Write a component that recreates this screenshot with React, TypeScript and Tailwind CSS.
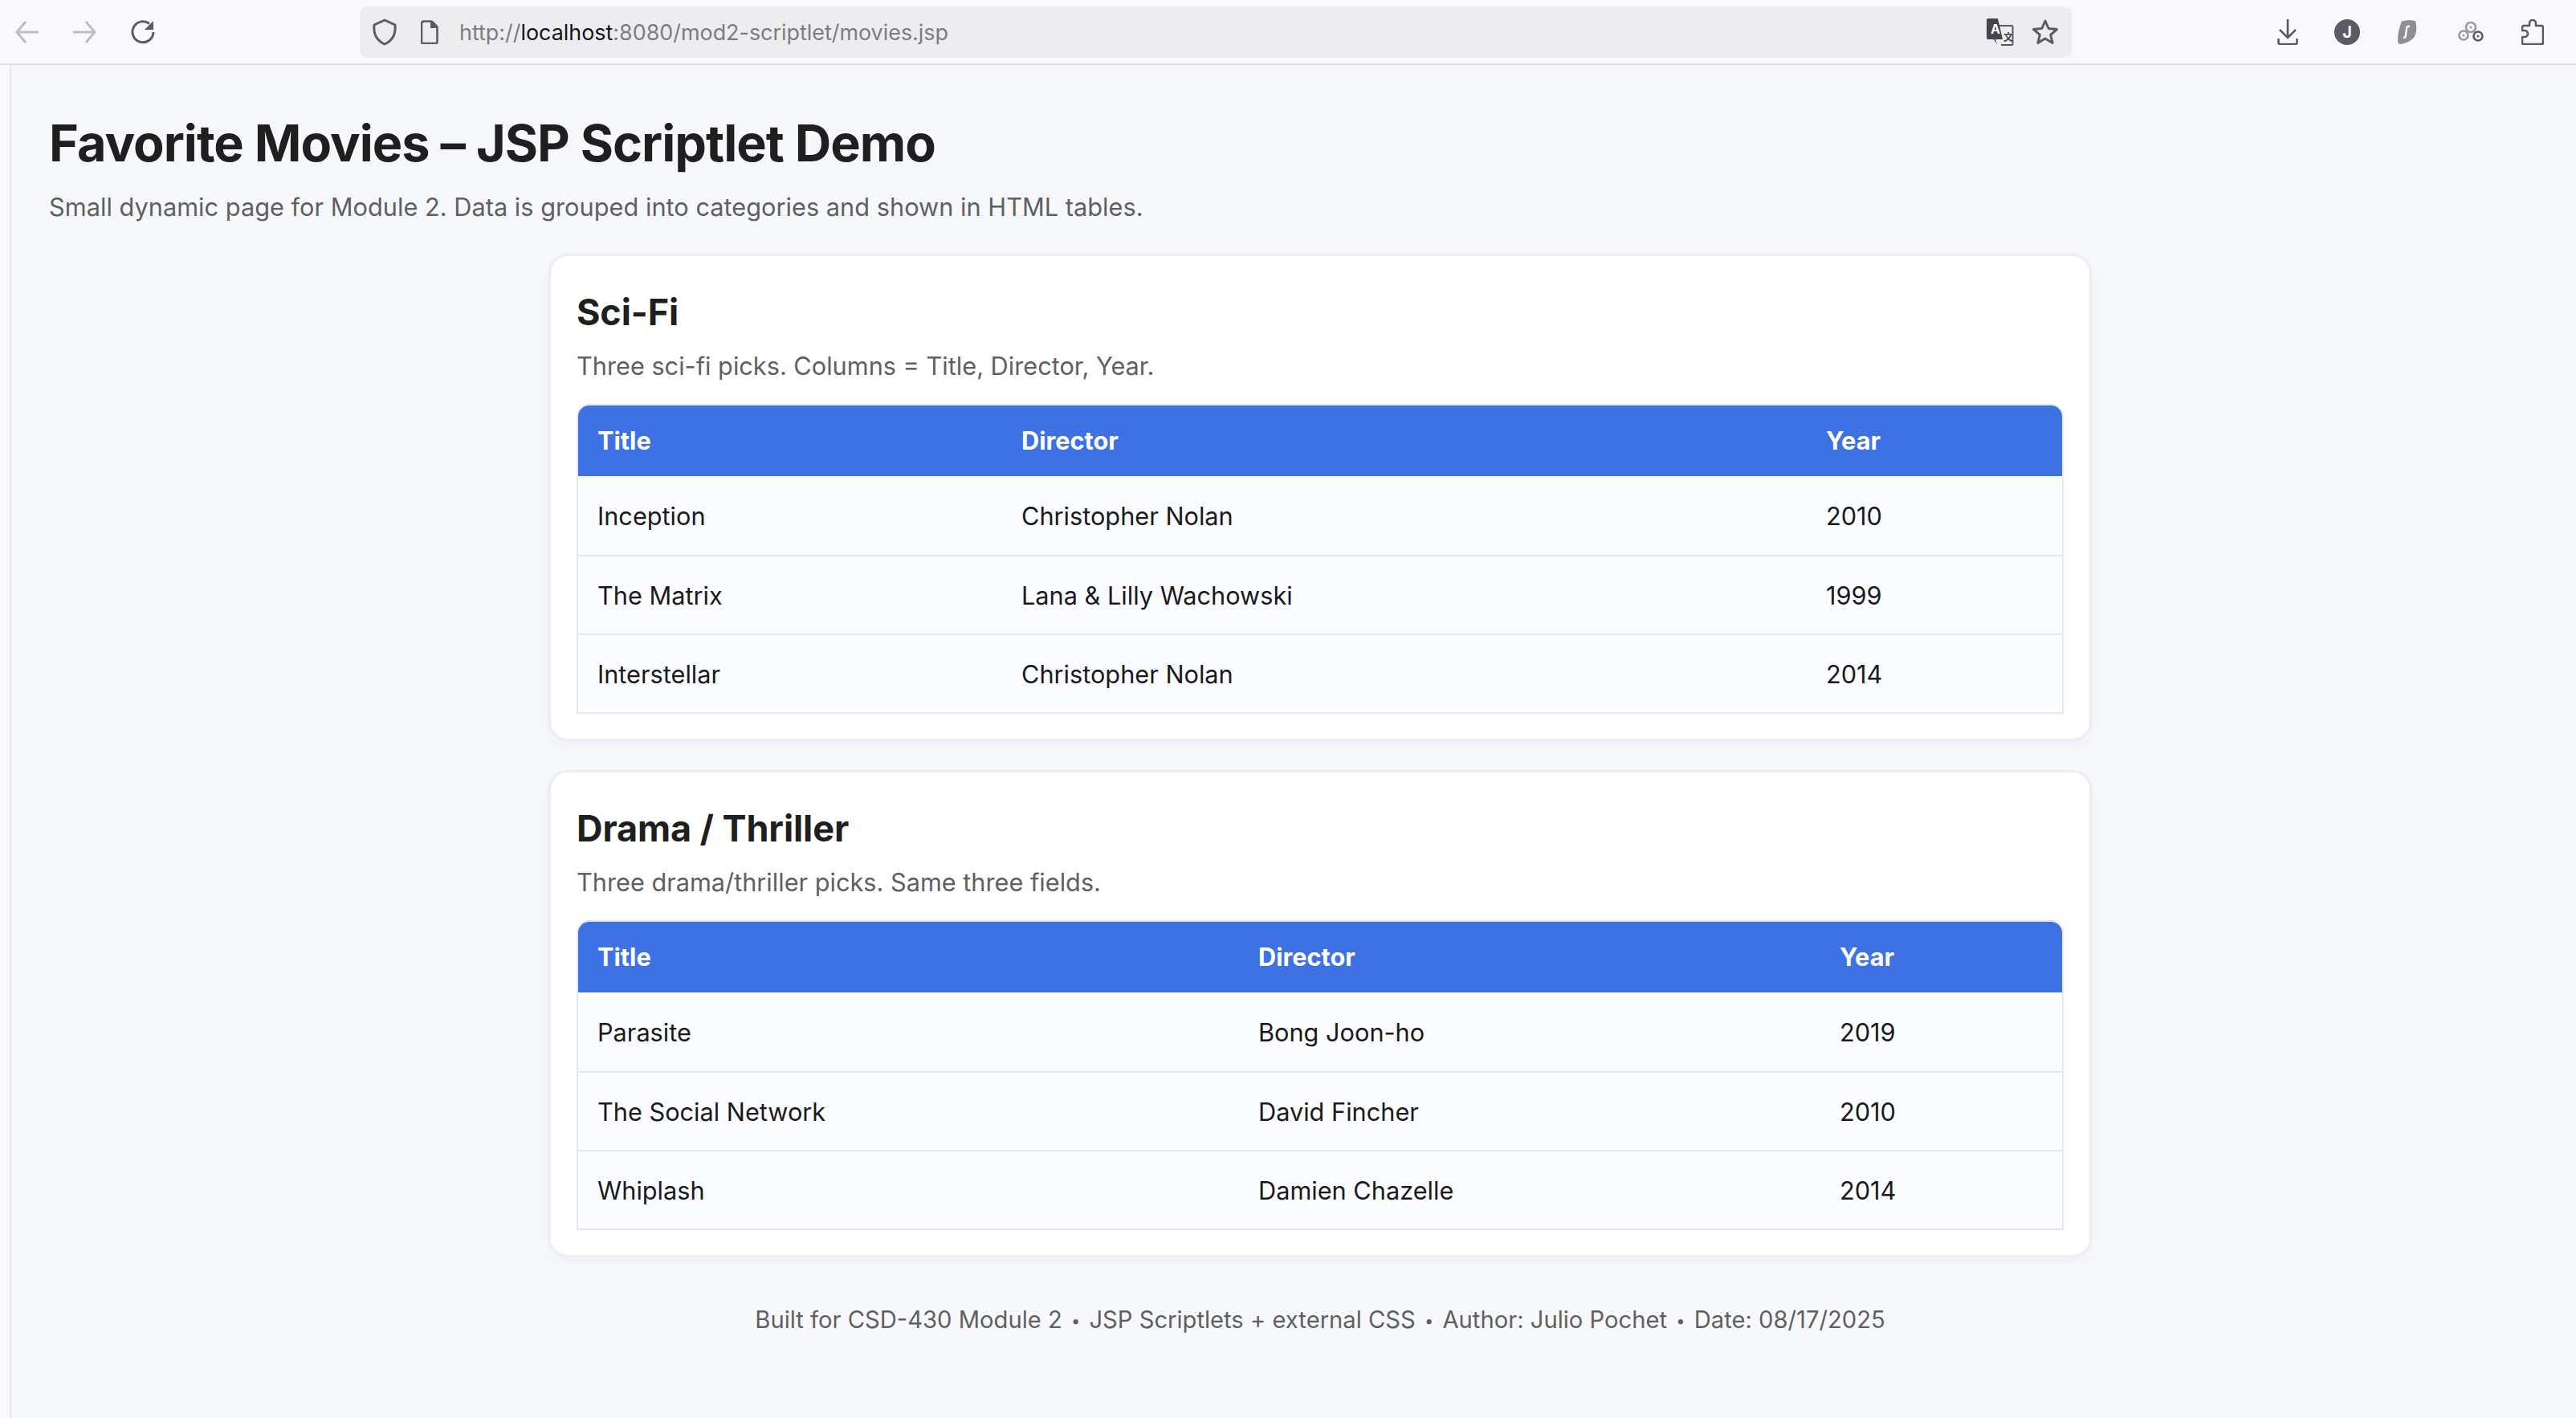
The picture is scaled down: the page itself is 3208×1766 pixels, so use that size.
const scifi = [
  ["Inception", "Christopher Nolan", "2010"],
  ["The Matrix", "Lana & Lilly Wachowski", "1999"],
  ["Interstellar", "Christopher Nolan", "2014"],
];

const drama = [
  ["Parasite", "Bong Joon-ho", "2019"],
  ["The Social Network", "David Fincher", "2010"],
  ["Whiplash", "Damien Chazelle", "2014"],
];

function Dot() {
  return <span className="mx-[3px] align-[2px] text-[20px]">•</span>;
}

function MovieCard({
  title,
  blurb,
  rows,
  colA,
  colB,
}: {
  title: string;
  blurb: string;
  rows: string[][];
  colA: string;
  colB: string;
}) {
  return (
    <section className="rounded-[24px] border-[3px] border-[#eceef3] bg-white px-[32px] pt-[38px] pb-[31px] shadow-[0_6px_16px_rgba(20,30,60,0.03)]">
      <h2 className="text-[45px] leading-[64px] font-bold tracking-[-0.1px] text-[#1f1f1f]">{title}</h2>
      <p className="mt-[13px] text-[30.7px] leading-[44px] text-[#606060]">{blurb}</p>
      <div className="mt-[25px] border-2 border-[#e4e7ec] rounded-t-[16px] overflow-hidden">
        <div className="flex h-[88px] items-center bg-[#3d71e4] pt-[1px] text-[30.7px] font-bold text-white">
          <div className={`${colA} pl-[24px]`}>Title</div>
          <div className={colB}>Director</div>
          <div>Year</div>
        </div>
        {rows.map((r, i) => (
          <div
            key={r[0]}
            className={`flex h-[98px] items-center bg-[#fbfcff] pt-[2px] text-[30.7px] text-[#1a1a1a] ${i > 0 ? "border-t-2 border-[#e4e7ec]" : ""}`}
          >
            <div className={`${colA} pl-[24px]`}>{r[0]}</div>
            <div className={colB}>{r[1]}</div>
            <div>{r[2]}</div>
          </div>
        ))}
      </div>
    </section>
  );
}

export default function App() {
  return (
    <div className="min-h-[1766px] bg-[#f9f9fb] font-['Inter',sans-serif]">
      {/* browser toolbar */}
      <div className="flex h-[81px] items-center border-b-2 border-[#e0e0e6]">
        <div className="flex w-[448px] items-center">
          <svg className="ml-[18px]" width="32" height="32" viewBox="0 0 32 32" fill="none" stroke="#bdbdc3" strokeWidth="3">
            <path d="M30 16H3M14 3L3 16l11 13" />
          </svg>
          <svg className="ml-[39px]" width="32" height="32" viewBox="0 0 32 32" fill="none" stroke="#bdbdc3" strokeWidth="3">
            <path d="M2 16h27M18 3l11 13-11 13" />
          </svg>
          <svg className="ml-[41px]" width="32" height="32" viewBox="0 0 32 32" fill="none">
            <path d="M24 5.500A13 13 0 1 0 29 16" stroke="#5b5b66" strokeWidth="3" />
            <path d="M29 2v11H18z" fill="#5b5b66" />
          </svg>
        </div>
        <div className="flex h-[64px] w-[2132px] items-center rounded-[10px] bg-[#ededf0]">
          <svg className="ml-[16px]" width="30" height="34" viewBox="0 0 30 34" fill="none" stroke="#5b5b66" strokeWidth="3">
            <path d="M15 2l13 6c1 10-2 19-13 24C4 27 1 18 2 8z" strokeLinejoin="round" />
          </svg>
          <svg className="ml-[30px]" width="22" height="30" viewBox="0 0 22 30">
            <path d="M3 1.500h10l7.500 7.500v18a2 2 0 0 1-2 2H3a2 2 0 0 1-2-2v-23a2 2 0 0 1 2-2z" fill="none" stroke="#5b5b66" strokeWidth="2.6" />
            <path d="M12 1h3l6 6v3h-9z" fill="#5b5b66" />
          </svg>
          <div className="ml-[26px] pt-[2px] text-[26.9px] text-[#7c7c85]">
            http://<span className="text-[#15141a]">localhost</span>:8080/mod2-scriptlet/movies.jsp
          </div>
          <svg className="ml-auto" width="34" height="34" viewBox="0 0 34 34">
            <path d="M16 9h15a1.500 1.500 0 0 1 1.500 1.500v21a1.500 1.500 0 0 1-1.500 1.500H18" fill="none" stroke="#5b5b66" strokeWidth="2" />
            <path d="M2 0h12l6 26H11l2 6-4-6H2a2 2 0 0 1-2-2V2a2 2 0 0 1 2-2z" fill="#45454d" />
            <text x="5" y="19" fontSize="16" fontWeight="700" fill="#fff" fontFamily="Inter">A</text>
            <text x="21" y="28" fontSize="12" fontWeight="600" fill="#45454d" fontFamily="Noto Sans CJK SC">文</text>
          </svg>
          <svg className="ml-[22px] mr-[16px]" width="34" height="34" viewBox="0 0 34 34" fill="none" stroke="#5b5b66" strokeWidth="3" strokeLinejoin="round">
            <path d="M17 3l4.200 9.500 10.300 1-7.800 6.800 2.400 10.200L17 25l-9.100 5.500 2.400-10.200L2.500 13.500l10.300-1z" />
          </svg>
        </div>
        <div className="flex flex-1 items-center">
          <svg className="ml-[256px]" width="26" height="32" viewBox="0 0 26 32" fill="none" stroke="#5b5b66" strokeWidth="2.6">
            <path d="M13 0v23M3 13l10 10 10-10M1.500 24v5a2 2 0 0 0 2 2h19a2 2 0 0 0 2-2v-5" />
          </svg>
          <div className="ml-[45px] flex h-[32px] w-[32px] items-center justify-center rounded-full bg-[#5b5b66] text-[20px] font-bold text-white">J</div>
          <svg className="ml-[47px]" width="24" height="30" viewBox="0 0 24 30">
            <path d="M5 1.500C10 0 17 0 22 1c2 8 2 15-2 21-4 4-10 7-17 8-2 0-3-2-3-5 0-8 2-16 5-24z" fill="#8e8e94" />
            <path d="M15 8c-3-1-4 1-4 3l-1 8c0 2-1 3-3 3" fill="none" stroke="#fff" strokeWidth="2.4" />
          </svg>
          <svg className="ml-[51px]" width="32" height="28" viewBox="0 0 32 28" fill="none" stroke="#9a9aa0" strokeWidth="2.600">
            <circle cx="16" cy="8" r="6" />
            <circle cx="16" cy="8" r="1.500" fill="#9a9aa0" stroke="none" />
            <circle cx="7" cy="18" r="5.500" />
            <circle cx="7" cy="18" r="1.500" fill="#9a9aa0" stroke="none" />
            <circle cx="25" cy="19" r="5.500" stroke="#5b5b66" />
            <circle cx="25" cy="19" r="1.500" fill="#5b5b66" stroke="none" />
          </svg>
          <svg className="ml-[47px]" width="28" height="32" viewBox="0 0 28 32" fill="none" stroke="#5b5b66" strokeWidth="2.600" strokeLinejoin="round">
            <path d="M3 8h7V5a4 4 0 0 1 8 0v3h7a2 2 0 0 1 2 2v19a2 2 0 0 1-2 2H3a2 2 0 0 1-2-2v-7h3a4 4 0 0 0 0-8H1v-4a2 2 0 0 1 2-2z" />
          </svg>
        </div>
      </div>

      {/* page */}
      <div className="ml-[12px] min-h-[1685px] border-l-2 border-[#e6e7ec] bg-[#f7f8fc] pt-[55px]">
        <h1 className="ml-[47px] text-[63px] leading-[84px] font-bold tracking-[-1px] text-[#1f1f1f]">
          Favorite Movies – JSP Scriptlet Demo
        </h1>
        <p className="ml-[47px] mt-[16px] text-[30.75px] leading-[44px] text-[#606060]">
          Small dynamic page for Module 2. Data is grouped into categories and shown in HTML tables.
        </p>
        <main className="ml-[669px] mt-[36px] flex w-[1922px] flex-col gap-[36px]">
          <MovieCard
            title="Sci-Fi"
            blurb="Three sci-fi picks. Columns = Title, Director, Year."
            rows={scifi}
            colA="w-[552px]"
            colB="w-[1002px]"
          />
          <MovieCard
            title="Drama / Thriller"
            blurb="Three drama/thriller picks. Same three fields."
            rows={drama}
            colA="w-[847px]"
            colB="w-[724px]"
          />
          <footer className="mt-[20px] text-center text-[29.2px] leading-[44px] text-[#606060]">
            Built for CSD-430 Module 2 <Dot /> JSP Scriptlets + external CSS <Dot /> Author: Julio Pochet <Dot /> Date: 08/17/2025
          </footer>
        </main>
      </div>
    </div>
  );
}
